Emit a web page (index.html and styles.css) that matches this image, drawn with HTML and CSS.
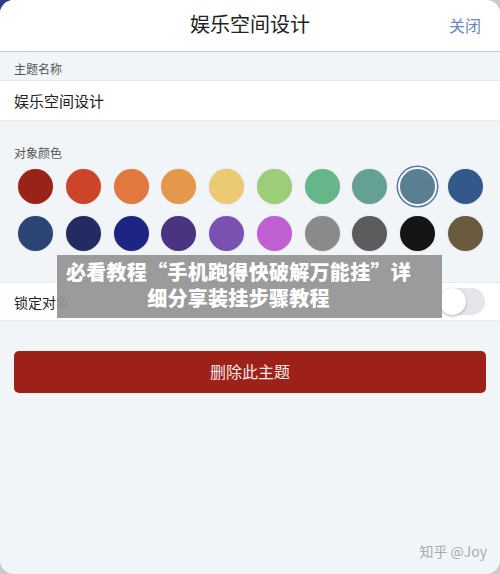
FILE: index.html
```html
<!DOCTYPE html>
<html lang="zh-CN">
<head>
<meta charset="utf-8">
<title>娱乐空间设计</title>
<link rel="stylesheet" href="styles.css">
</head>
<body>
<div class="card">
  <header class="header">
    <span></span>
    <h1 class="title">娱乐空间设计</h1>
    <span class="close">关闭</span>
  </header>
  <div class="label label-name">主题名称</div>
  <div class="row input-row">娱乐空间设计</div>
  <div class="label label-color">对象颜色</div>
  <div class="swatches">
    <span class="dot" style="background:#9a2318"></span>
    <span class="dot" style="background:#cc4529"></span>
    <span class="dot" style="background:#e0783f"></span>
    <span class="dot" style="background:#e3984a"></span>
    <span class="dot" style="background:#ecc973"></span>
    <span class="dot" style="background:#9ccd79"></span>
    <span class="dot" style="background:#65b688"></span>
    <span class="dot" style="background:#65a095"></span>
    <span class="dot selected" style="background:#5a7f91"></span>
    <span class="dot" style="background:#33588a"></span>
  </div>
  <div class="swatches second">
    <span class="dot" style="background:#2b4473"></span>
    <span class="dot" style="background:#222c63"></span>
    <span class="dot" style="background:#1d2481"></span>
    <span class="dot" style="background:#4a3380"></span>
    <span class="dot" style="background:#7952b1"></span>
    <span class="dot" style="background:#c05fd2"></span>
    <span class="dot" style="background:#8a8a8a"></span>
    <span class="dot" style="background:#5c5c5f"></span>
    <span class="dot" style="background:#141414"></span>
    <span class="dot" style="background:#6a5b40"></span>
  </div>
  <div class="row lock-row">
    <span>锁定对象</span>
    <span class="toggle"><span class="knob"></span></span>
  </div>
  <button class="delete">删除此主题</button>
  <div class="watermark">知乎 @Joy</div>
  <div class="overlay">必看教程“手机跑得快破解万能挂”详<br>细分享装挂步骤教程</div>
</div>
</body>
</html>
```
FILE: styles.css
```css
html, body {
  margin: 0;
  padding: 0;
}
body {
  width: 500px;
  height: 574px;
  background:
    radial-gradient(circle at 0 0, #2a3a8f 0, #2a3a8f 13px, transparent 14px),
    #c9cacd;
  font-family: "Noto Sans CJK SC", "Noto Sans", sans-serif;
  overflow: hidden;
}
.card {
  position: relative;
  width: 500px;
  height: 574px;
  background: #f2f5f8;
  border-radius: 14px;
  overflow: hidden;
  display: flex;
  flex-direction: column;
}
.header {
  height: 51px;
  background: #fff;
  border-bottom: 1px solid #c8c8cc;
  display: grid;
  grid-template-columns: 1fr auto 1fr;
  align-items: center;
  flex-shrink: 0;
}
.title {
  margin: 0;
  font-size: 20px;
  font-weight: 400;
  color: #222;
  line-height: 26px;
  padding-bottom: 4px;
}
.close {
  justify-self: end;
  padding-right: 19px;
  font-size: 16px;
  color: #6588be;
  padding-bottom: 2px;
}
.label {
  font-size: 12px;
  color: #555;
  line-height: 18px;
  padding-left: 14px;
}
.label-name {
  height: 28px;
  box-sizing: border-box;
  padding-top: 8px;
}
.row {
  background: #fff;
  border-top: 1px solid #e7eaee;
  border-bottom: 1px solid #e7eaee;
  padding: 0 14px;
  box-sizing: border-box;
}
.input-row {
  height: 41px;
  line-height: 39px;
  font-size: 15px;
  color: #222;
}
.label-color {
  padding-top: 23px;
  line-height: 17px;
}
.swatches {
  display: flex;
  justify-content: space-between;
  padding: 0 17px 0 18px;
  margin-top: 8px;
}
.swatches.second {
  margin-top: 12px;
}
.dot {
  width: 35px;
  height: 35px;
  border-radius: 50%;
  box-shadow: 0 0 2px rgba(0, 0, 0, 0.12);
}
.dot.selected {
  box-shadow: 0 0 0 2px #f4f6f8, 0 0 0 3.5px #5a7898;
}
.lock-row {
  margin-top: 31px;
  height: 39px;
  display: flex;
  align-items: center;
  justify-content: space-between;
  font-size: 14px;
  color: #222;
}
.toggle {
  width: 46px;
  height: 27px;
  border-radius: 14px;
  background: #e6e6ea;
  position: relative;
  margin-right: 1px;
}
.knob {
  position: absolute;
  left: 0;
  top: 0;
  width: 27px;
  height: 27px;
  border-radius: 50%;
  background: #fff;
  box-shadow: 0 1px 3px rgba(0, 0, 0, 0.3);
}
.delete {
  margin: 30px 14px 0;
  height: 42px;
  border: 0;
  border-radius: 5px;
  background: #9e2119;
  color: #f4e8e6;
  font-family: inherit;
  font-size: 16px;
  padding: 0 0 2px;
  flex-shrink: 0;
}
.watermark {
  margin-top: auto;
  align-self: flex-end;
  padding: 0 13px 13px 0;
  font-size: 14px;
  line-height: 20px;
  color: #a9abae;
}
.overlay {
  position: absolute;
  left: 57px;
  top: 255px;
  width: 385px;
  height: 63px;
  box-sizing: border-box;
  padding: 4px 30px 0 8px;
  background: rgba(150, 150, 150, 0.95);
  color: #fff;
  font-size: 20px;
  font-weight: 900;
  line-height: 26px;
  text-align: center;
  letter-spacing: 0.3px;
}
```
